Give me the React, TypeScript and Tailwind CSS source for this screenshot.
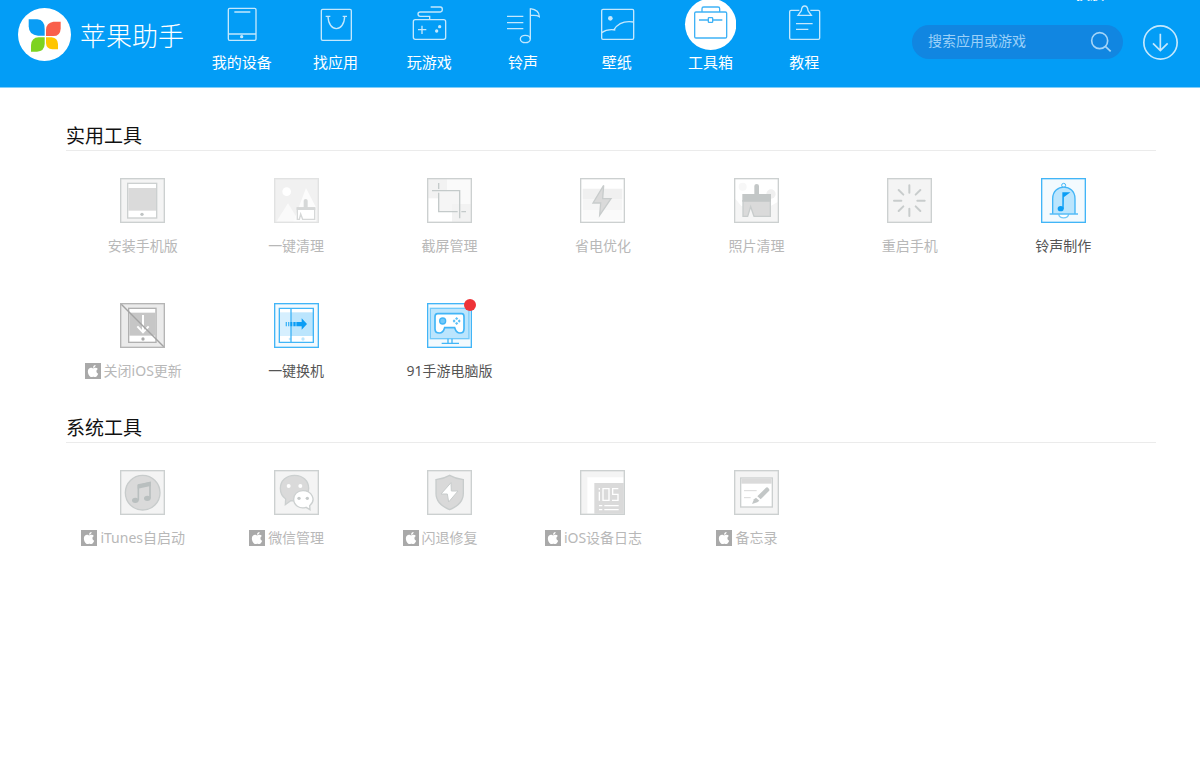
import type { ReactNode } from "react";
import { FaApple } from "react-icons/fa";

type NavItem = { label: string; icon: ReactNode; active?: boolean };
type Tool = {
  label: string;
  icon: ReactNode;
  enabled?: boolean;
  apple?: boolean;
  dot?: boolean;
};

const navItems: NavItem[] = [
  {
    label: "我的设备",
    icon: (
      <g>
        <rect x="37" y="25" width="83" height="96" rx="4" />
        <path d="M55 36H103M37 102H120" />
        <circle cx="77" cy="110" r="5" fill="currentColor" stroke="none" />
      </g>
    ),
  },
  {
    label: "找应用",
    icon: (
      <g>
        <rect x="34" y="28" width="90" height="93" rx="4" />
        <path d="M47 49H61M98 49H111M54 49C55 98 103 98 104 49" />
      </g>
    ),
  },
  {
    label: "玩游戏",
    icon: (
      <g>
        <rect x="31" y="59" width="97" height="59" rx="6" />
        <path d="M83 21H112Q118 21 118 28Q118 36 112 36H52Q45 36 45 42Q45 49 52 49H80V59M45 89H70M57 77V102" />
        <circle cx="110" cy="80" r="5" fill="currentColor" stroke="none" />
        <circle cx="101" cy="93" r="5" fill="currentColor" stroke="none" />
      </g>
    ),
  },
  {
    label: "铃声",
    icon: (
      <g>
        <path d="M30 49H79M30 68H79M30 86H79M100 117V25M100 26C114 28 127 33 127 50C119 44 110 47 100 46" />
        <ellipse cx="85" cy="117" rx="15" ry="11" />
      </g>
    ),
  },
  {
    label: "壁纸",
    icon: (
      <g>
        <rect x="32" y="28" width="96" height="90" rx="4" />
        <circle cx="58" cy="55" r="7" fill="currentColor" stroke="none" />
        <path d="M32 98C46 88 60 88 73 90M69 89C82 68 103 62 128 66" />
      </g>
    ),
  },
  {
    label: "工具箱",
    active: true,
    icon: (
      <g>
        <circle cx="80" cy="73" r="77" fill="#fff" stroke="none" />
        <rect x="32" y="36" width="96" height="78" rx="4" />
        <path d="M54 36V26Q54 21 59 21H102Q107 21 107 26V36M45 60H72M87 60H115" />
        <rect x="73" y="53" width="13" height="14" rx="2" />
      </g>
    ),
  },
  {
    label: "教程",
    icon: (
      <g>
        <path d="M64 31H39Q35 31 35 35V114Q35 118 39 118H121Q125 118 125 114V35Q125 31 121 31H97M54 71H104M54 88H91" />
        <path d="M60 46L70 32Q71 18 80 18Q89 18 90 32L100 46Z" />
      </g>
    ),
  },
];

function Tile({ fill = "#f4f4f4", stroke = "#ccd0d0", children }: { fill?: string; stroke?: string; children: ReactNode }) {
  return (
    <svg viewBox="0 0 135 135" className="size-[45px]" fill="none" aria-hidden="true">
      <rect x="2" y="2" width="131" height="131" fill={fill} />
      {children}
      <rect x="2" y="2" width="131" height="131" stroke={stroke} strokeWidth="4" />
    </svg>
  );
}

const utilityTools: Tool[] = [
  {
    label: "安装手机版",
    icon: (
      <Tile>
        <rect x="23" y="16" width="87" height="104" fill="#fff" stroke="#ccd0d0" strokeWidth="4" />
        <rect x="25" y="30" width="83" height="68" fill="#dadada" />
        <circle cx="66" cy="109" r="5" fill="#bfc3c3" />
      </Tile>
    ),
  },
  {
    label: "一键清理",
    icon: (
      <Tile fill="#f1f1f1" stroke="#e1e2e2">
        <circle cx="38" cy="41" r="13" fill="#fff" />
        <path d="M7 131L42 76L76 131Z" fill="#fafafa" />
        <path d="M58 131L96 30L127 90V131Z" fill="#fcfcfc" />
        <path d="M70 90H122V124H86L80 108L76 124H70Z" fill="#fff" stroke="#d6d8d8" strokeWidth="4" />
        <path d="M89 88V68Q89 63 95 63Q101 63 101 68V88H124V96H68V88Z" fill="#d6d8d8" />
      </Tile>
    ),
  },
  {
    label: "截屏管理",
    icon: (
      <Tile fill="#fafafa">
        <path d="M4 4H60V60H4Z" fill="#f2f2f2" />
        <path d="M4 62H75V131H4Z" fill="#fff" />
        <path d="M36 40H97V100H36Z" fill="#f5f5f5" />
        <path d="M75 78H131V131H75Z" fill="#f2f2f2" />
        <path d="M35 15V33M35 44V101H92M103 101H117M15 38H98V121" stroke="#c4caca" strokeWidth="4" />
      </Tile>
    ),
  },
  {
    label: "省电优化",
    icon: (
      <Tile fill="#fff">
        <path d="M8 32H127V64H8Z" fill="#f0f0f0" />
        <path d="M8 64H127V96H8Z" fill="#f5f5f5" />
        <path d="M8 96H127V127H8Z" fill="#fafafa" />
        <path d="M71 22L39 75H62L59 112L93 62H68Z" fill="#dadada" stroke="#c8cccc" strokeWidth="4" />
      </Tile>
    ),
  },
  {
    label: "照片清理",
    icon: (
      <Tile fill="#fff">
        <circle cx="26" cy="26" r="12" fill="#f7f7f7" />
        <circle cx="111" cy="48" r="14" fill="#f0f0f0" />
        <path d="M4 62L22 84H110L131 72V131H4Z" fill="#f5f5f5" />
        <path d="M27 68H109V115H60L50 86L41 115H27Z" fill="#dadada" stroke="#c8cccc" strokeWidth="4" />
        <path d="M61 48V24Q61 18 68 18Q75 18 75 24V48H111V71H25V48Z" fill="#c3c7c7" />
      </Tile>
    ),
  },
  {
    label: "重启手机",
    icon: (
      <Tile>
        <path
          d="M67 22V44M67 92V114M21 68H43M91 68H113M35 36L49 50M100 36L86 50M35 99L49 85M100 99L86 85"
          stroke="#c8cccc"
          strokeWidth="6"
          strokeLinecap="round"
        />
      </Tile>
    ),
  },
  {
    label: "铃声制作",
    enabled: true,
    icon: (
      <Tile fill="#f3fafe" stroke="#41b5f7">
        <circle cx="68" cy="22" r="6" stroke="#41b5f7" strokeWidth="3" />
        <path d="M53 109C56 123 80 123 83 109" fill="#fff" stroke="#72c9f9" strokeWidth="4" />
        <path d="M35 107V62C35 16 102 16 102 62V107" fill="#bbe5fd" stroke="#41b5f7" strokeWidth="4" />
        <path d="M26 108H111" stroke="#41b5f7" strokeWidth="4" />
        <ellipse cx="59" cy="92" rx="9" ry="8" fill="#0a9df5" />
        <path d="M66 93V45H82L68 55" fill="#0a9df5" stroke="#0a9df5" strokeWidth="4" />
      </Tile>
    ),
  },
  {
    label: "关闭iOS更新",
    apple: true,
    icon: (
      <Tile fill="#ebebeb" stroke="#b5b5b5">
        <rect x="26" y="16" width="82" height="102" fill="#fff" stroke="#b0b0b0" strokeWidth="4" />
        <rect x="28" y="29" width="78" height="69" fill="#c6c6c6" />
        <circle cx="69" cy="108" r="5" fill="#aaa" />
        <path d="M69 36V86M52 70L69 88L86 70" stroke="#fff" strokeWidth="6" />
        <path d="M3 3L132 132" stroke="#a3a3a3" strokeWidth="4" />
      </Tile>
    ),
  },
  {
    label: "一键换机",
    enabled: true,
    icon: (
      <Tile fill="#f3fafe" stroke="#41b5f7">
        <rect x="16" y="16" width="102" height="102" fill="#fff" />
        <rect x="16" y="28" width="35" height="71" fill="#d6effe" />
        <rect x="51" y="28" width="67" height="71" fill="#bbe5fd" />
        <circle cx="48" cy="108" r="4" fill="#c2e8fd" />
        <circle cx="87" cy="108" r="5" fill="#bbe5fd" />
        <path d="M16 16H118V118H16ZM51 16V118" stroke="#41b5f7" strokeWidth="4" />
        <path d="M37 57V70M44 57V70" stroke="#41b5f7" strokeWidth="4" />
        <path d="M49 57H55V70H49ZM58 57H65V70H58ZM67 57H83V46L99 63L83 80V70H67Z" fill="#0a9df5" />
      </Tile>
    ),
  },
  {
    label: "91手游电脑版",
    enabled: true,
    dot: true,
    icon: (
      <Tile fill="#f3fafe" stroke="#41b5f7">
        <rect x="10" y="16" width="116" height="91" fill="#bbe5fd" stroke="#72c9f9" strokeWidth="4" />
        <path d="M63 107V120M75 107V120M44 121H96" stroke="#41b5f7" strokeWidth="4" />
        <path
          d="M32 32H104Q111 32 111 41V77Q111 90 99 90Q88 90 83 74H53Q48 90 37 90Q24 90 24 77V41Q24 32 32 32Z"
          fill="#fff"
          stroke="#41b5f7"
          strokeWidth="5"
        />
        <circle cx="47" cy="54" r="9" fill="#72c9f9" stroke="#41b5f7" strokeWidth="4" />
        <path
          d="M89 42L94 47L89 51L84 47ZM89 57L94 61L89 66L84 61ZM81 49L86 54L81 59L77 54ZM97 49L101 54L97 59L92 54Z"
          fill="#5cc0f8"
        />
      </Tile>
    ),
  },
];

const systemTools: Tool[] = [
  {
    label: "iTunes自启动",
    apple: true,
    icon: (
      <Tile>
        <circle cx="68" cy="68" r="52" fill="#dadada" stroke="#c8cccc" strokeWidth="4" />
        <path d="M55 91V47L90 38V85" stroke="#b9bfbf" strokeWidth="5" />
        <path d="M53 43L92 35V48L53 56Z" fill="#b9bfbf" />
        <ellipse cx="46" cy="91" rx="10" ry="8" fill="#b9bfbf" />
        <ellipse cx="82" cy="85" rx="10" ry="8" fill="#b9bfbf" />
      </Tile>
    ),
  },
  {
    label: "微信管理",
    apple: true,
    icon: (
      <Tile>
        <path
          d="M62 16C37 16 19 32 19 55C19 69 25 80 35 87L34 104L50 92C84 98 104 77 104 55C104 32 86 16 62 16Z"
          fill="#dadada"
          stroke="#ccd0d0"
          strokeWidth="4"
        />
        <circle cx="44" cy="48" r="6" fill="#fff" />
        <circle cx="79" cy="48" r="6" fill="#fff" />
        <path
          d="M87 62C70 62 59 73 59 88C59 105 76 118 96 112L108 119L107 107C128 90 113 62 87 62Z"
          fill="#fff"
          stroke="#ccd0d0"
          strokeWidth="4"
        />
        <circle cx="75" cy="85" r="5" fill="#c6caca" />
        <circle cx="100" cy="85" r="5" fill="#c6caca" />
      </Tile>
    ),
  },
  {
    label: "闪退修复",
    apple: true,
    icon: (
      <Tile>
        <path
          d="M68 16C56 23 42 27 27 29V70C27 97 45 110 68 119C91 110 109 97 109 70V29C94 27 80 23 68 16Z"
          fill="#d9d9d9"
          stroke="#c8cccc"
          strokeWidth="4"
        />
        <path d="M72 38L42 72H61L65 96L93 63H73Z" fill="#fff" stroke="#c8cccc" strokeWidth="3" />
      </Tile>
    ),
  },
  {
    label: "iOS设备日志",
    apple: true,
    icon: (
      <Tile>
        <path d="M22 22H131V131H22Z" fill="#fff" />
        <path d="M43 39H131V131H43Z" fill="#dadada" />
        <path
          d="M58 65V92M58 54V59M69 56H87V91H69ZM115 56H98V73H114V91H96M57 107H67M73 107H116M57 119H67M73 119H116"
          stroke="#fff"
          strokeWidth="4"
        />
      </Tile>
    ),
  },
  {
    label: "备忘录",
    apple: true,
    icon: (
      <Tile>
        <rect x="20" y="24" width="95" height="87" fill="#fff" stroke="#ccd0d0" strokeWidth="4" />
        <path d="M22 26H113V41H22Z" fill="#dadada" />
        <path d="M30 62H68M30 83H50" stroke="#dadada" strokeWidth="3" />
        <path d="M95 54Q99 50 103 54L105 57Q108 60 104 64L80 88L70 79Z" fill="#c3c7c7" />
        <path d="M66 83L76 92L70 97L54 102L60 88Z" fill="#c3c7c7" />
      </Tile>
    ),
  },
];

function Logo() {
  return (
    <svg viewBox="0 0 159 159" className="size-[53px] shrink-0" aria-hidden="true">
      <circle cx="79.500" cy="79.500" r="79.500" fill="#fff" />
      <path d="M32 34H58Q80 36 80 62V83H60Q33 82 32 55Z" fill="#0a9df5" />
      <path d="M128 41V62Q127 84 106 84H84V65Q85 44 106 41Z" fill="#f95f4b" />
      <path d="M80 88V108Q79 130 57 131H39V112Q40 89 62 88Z" fill="#7ed321" />
      <path d="M84 88H101Q119 90 120 108V124H103Q85 123 84 105Z" fill="#ffc600" />
    </svg>
  );
}

function ToolGrid({ tools }: { tools: Tool[] }) {
  return (
    <ul className="mt-[27px] grid grid-cols-7 gap-y-[46px] pr-4">
      {tools.map((tool) => (
        <li key={tool.label}>
          <button type="button" disabled={!tool.enabled} className="flex w-full flex-col items-center gap-3">
            <span className="relative">
              {tool.icon}
              {tool.dot && <span className="absolute -top-1 -right-1 size-3 rounded-full bg-[#ee3338]" />}
            </span>
            <span className="grid w-full grid-cols-[1fr_auto_1fr] items-center gap-x-[3px] text-sm leading-[22px] whitespace-nowrap">
              <span className="flex justify-end">
                {tool.apple && (
                  <span className="flex size-4 items-center justify-center bg-[#a9a9a9] text-white">
                    <FaApple size={14} aria-hidden="true" />
                  </span>
                )}
              </span>
              <span className={tool.enabled ? "text-[#555555]" : "text-[#b8b8b8]"}>{tool.label}</span>
              <span />
            </span>
          </button>
        </li>
      ))}
    </ul>
  );
}

function Section({ title, tools }: { title: string; tools: Tool[] }) {
  return (
    <section>
      <h2 className="border-b border-[#ebebeb] pb-px text-[19px] leading-[26px] text-[#111111]">{title}</h2>
      <ToolGrid tools={tools} />
    </section>
  );
}

export default function App() {
  return (
    <div className="min-h-screen bg-white font-['Noto_Sans','Noto_Sans_CJK_SC',sans-serif]">
      <header className="relative flex items-start overflow-hidden border-b border-[#80cefa] bg-[#039df6] pr-[22px] pb-[15px] pl-[18px] text-white">
        <a href="#" className="mt-2 flex items-start gap-[9px]">
          <Logo />
          <span className="text-[26px] leading-[56px] font-light whitespace-nowrap">苹果助手</span>
        </a>
        <nav className="ml-[11px] w-[656px] shrink-0">
          <ul className="grid grid-cols-7">
            {navItems.map((item) => (
              <li key={item.label}>
                <a
                  href="#"
                  aria-current={item.active ? "page" : undefined}
                  className="flex flex-col items-center gap-0.5 text-[15px] leading-5"
                >
                  <svg
                    viewBox="0 0 156 150"
                    className={item.active ? "h-[50px] w-[52px] text-[#3fb2f6]" : "h-[50px] w-[52px] text-[#c4e8fd]"}
                    fill="none"
                    stroke="currentColor"
                    strokeWidth="4"
                    aria-hidden="true"
                  >
                    {item.icon}
                  </svg>
                  <span>{item.label}</span>
                </a>
              </li>
            ))}
          </ul>
        </nav>
        <form role="search" className="mt-[25px] ml-auto flex h-[34px] w-[211px] items-center rounded-full bg-[#1186e1] pr-[11px] pl-4">
          <input
            type="text"
            aria-label="搜索应用或游戏"
            placeholder="搜索应用或游戏"
            className="min-w-0 flex-1 bg-transparent pb-0.5 text-sm text-white outline-none placeholder:text-[#9bd0f8]"
          />
          <button type="submit" aria-label="搜索" className="text-[#a4d5f8]">
            <svg viewBox="0 0 66 66" className="size-[22px]" fill="none" stroke="currentColor" strokeWidth="5" aria-hidden="true">
              <circle cx="29" cy="29" r="24" />
              <path d="M46 46L62 61" />
            </svg>
          </button>
        </form>
        <button type="button" aria-label="下载" className="mt-[25px] ml-5 shrink-0 text-[#c5e8fd]">
          <svg viewBox="0 0 105 105" className="size-[35px]" fill="none" stroke="currentColor" strokeWidth="5" aria-hidden="true">
            <circle cx="52.500" cy="52.500" r="50" />
            <path d="M52 26V77M30 55L52 77L74 55" />
          </svg>
        </button>
        <span className="absolute -top-[14px] right-24 text-sm leading-4">换肤</span>
      </header>
      <main className="flex flex-col gap-[33px] pt-[35px] pr-11 pl-[66px]">
        <Section title="实用工具" tools={utilityTools} />
        <Section title="系统工具" tools={systemTools} />
      </main>
    </div>
  );
}
